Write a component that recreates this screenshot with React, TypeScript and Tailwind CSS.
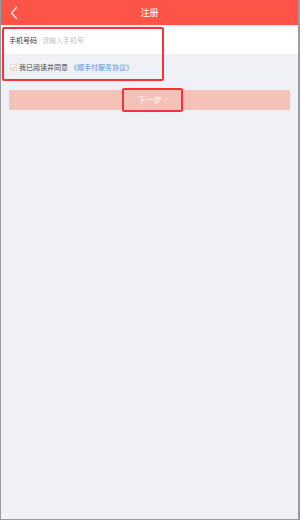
export default function App() {
    return (
        <div
            className="flex flex-col w-[300px] h-[520px] bg-[#f0f1f7] border-l border-r-2 border-b border-[#9a9a9e] overflow-hidden"
            style={{ fontFamily: '"Noto Sans CJK SC", "Noto Sans", sans-serif' }}
        >
            <div className="relative flex items-center justify-center h-[25px] bg-[#fe5447] shrink-0">
                <svg viewBox="0 0 12 14" className="absolute left-[7px] top-[6px] w-[12px] h-[14px]">
                    <path d="M8.5 1.5 L3.5 7 L8.5 12.5" fill="none" stroke="#fff" strokeOpacity="0.9" strokeWidth="1.3" strokeLinecap="round" strokeLinejoin="round" />
                </svg>
                <span className="text-[9px] leading-none text-white">注册</span>
            </div>

            <div className="relative mt-[2px]">
                <div className="flex items-center h-[27px] bg-white px-[8px]">
                    <span className="text-[7px] text-[#333]">手机号码</span>
                    <span className="ml-[5px] text-[7px] text-[#c4c4c4]">请输入手机号</span>
                </div>

                <div className="flex items-center h-[27px] px-[9px]">
                    <span className="flex items-center justify-center w-[7px] h-[7px] bg-white border border-[#ead9d6]">
                        <svg viewBox="0 0 10 10" className="w-[6px] h-[6px]">
                            <path d="M1.2 5 L4 7.8 L9 2" fill="none" stroke="#f07a6c" strokeWidth="1.8" />
                        </svg>
                    </span>
                    <span className="ml-[2px] text-[7px] text-[#444]">我已阅读并同意</span>
                    <span className="ml-[2px] text-[7px] text-[#4a95e0]">《顺手付服务协议》</span>
                </div>

                <div className="absolute left-[1px] top-0 w-[162px] h-[54px] border-2 border-[#f5333b] rounded-[2px]" />
            </div>

            <div className="relative mx-[8px] mt-[9px]">
                <div className="flex items-center justify-center h-[20px] bg-[#f5c2b9] rounded-[1px]">
                    <span className="text-[8px] text-white/90">下一步</span>
                </div>
                <div className="absolute left-[113px] top-[-2px] w-[61px] h-[24px] border-2 border-[#f5333b] rounded-[2px]" />
            </div>
        </div>
    )
}
